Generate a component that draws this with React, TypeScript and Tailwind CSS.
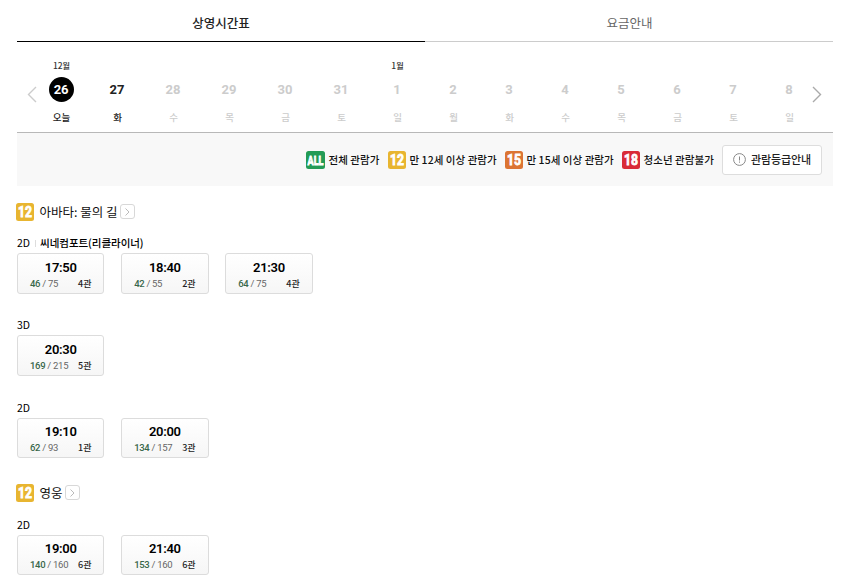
import clsx from 'clsx';

type Rating = 'ALL' | '12' | '15' | '18';

interface Showing {
    time: string;
    left: number;
    total: number;
    hall: string;
}

interface Group {
    type: string;
    note?: string;
    showings: Showing[];
}

interface Movie {
    title: string;
    rating: Rating;
    groups: Group[];
}

const days = [
    { date: 26, label: '오늘', month: '12월' },
    { date: 27, label: '화' },
    { date: 28, label: '수' },
    { date: 29, label: '목' },
    { date: 30, label: '금' },
    { date: 31, label: '토' },
    { date: 1, label: '일', month: '1월' },
    { date: 2, label: '월' },
    { date: 3, label: '화' },
    { date: 4, label: '수' },
    { date: 5, label: '목' },
    { date: 6, label: '금' },
    { date: 7, label: '토' },
    { date: 8, label: '일' },
];

const ratings: { rating: Rating; label: string; width: string }[] = [
    { rating: 'ALL', label: '전체 관람가', width: 'w-[82px]' },
    { rating: '12', label: '만 12세 이상 관람가', width: 'w-[117px]' },
    { rating: '15', label: '만 15세 이상 관람가', width: 'w-[117px]' },
    { rating: '18', label: '청소년 관람불가', width: 'w-[100px]' },
];

const movies: Movie[] = [
    {
        title: '아바타: 물의 길',
        rating: '12',
        groups: [
            {
                type: '2D',
                note: '씨네컴포트(리클라이너)',
                showings: [
                    { time: '17:50', left: 46, total: 75, hall: '4관' },
                    { time: '18:40', left: 42, total: 55, hall: '2관' },
                    { time: '21:30', left: 64, total: 75, hall: '4관' },
                ],
            },
            {
                type: '3D',
                showings: [{ time: '20:30', left: 169, total: 215, hall: '5관' }],
            },
            {
                type: '2D',
                showings: [
                    { time: '19:10', left: 62, total: 93, hall: '1관' },
                    { time: '20:00', left: 134, total: 157, hall: '3관' },
                ],
            },
        ],
    },
    {
        title: '영웅',
        rating: '12',
        groups: [
            {
                type: '2D',
                showings: [
                    { time: '19:00', left: 140, total: 160, hall: '6관' },
                    { time: '21:40', left: 153, total: 160, hall: '6관' },
                ],
            },
        ],
    },
];

const ratingColors: Record<Rating, string> = {
    ALL: '#239b56',
    '12': '#e8b530',
    '15': '#dc7433',
    '18': '#d92b38',
};

function RatingBadge({ rating }: { rating: Rating }) {
    const width = rating === 'ALL' ? 19 : 18;
    const textWidth = rating === 'ALL' ? 16 : 14;

    return (
        <svg width={width} height="18" viewBox={`0 0 ${width} 18`} className="shrink-0 overflow-visible">
            <rect width={width} height="18" rx="2.5" fill={ratingColors[rating]} />
            <text
                x={(width - textWidth) / 2}
                y={rating === 'ALL' ? 13.5 : 14}
                textLength={textWidth}
                lengthAdjust="spacingAndGlyphs"
                className={clsx(
                    "fill-white stroke-white font-['Roboto',sans-serif] font-bold",
                    rating === 'ALL' ? 'text-[13px]' : 'text-[14px]',
                )}
                strokeWidth="0.8"
            >
                {rating}
            </text>
        </svg>
    );
}

function Chevron({ flip = false, className }: { flip?: boolean; className: string }) {
    return (
        <svg width="10" height="17" viewBox="0 0 10 17" fill="none" strokeWidth="1.4" className={className}>
            <path d={flip ? 'M9 1L1.5 8.5L9 16' : 'M1 1L8.5 8.5L1 16'} stroke="currentColor" />
        </svg>
    );
}

function ShowingCard({ showing }: { showing: Showing }) {
    return (
        <button
            type="button"
            className="flex h-[40.6px] w-[87.45px] flex-col rounded-[3px] border border-[#dcdcdc] bg-linear-to-b from-white to-[#f6f6f6] px-3 pt-[5.6px]"
        >
            <span className="w-full text-center font-['Roboto',sans-serif] text-[13px] leading-4 font-semibold tracking-[-0.3px] text-black">
                {showing.time}
            </span>
            <span className="flex h-4 w-full items-center justify-between text-[9px] leading-4">
                <span className="font-['Roboto',sans-serif] text-[9.5px] tracking-[-0.3px] text-[#666]">
                    <span className="font-medium text-[#38674b]">{showing.left}</span> / {showing.total}
                </span>
                <span className="font-medium text-[#222]">{showing.hall}</span>
            </span>
        </button>
    );
}

function MovieSection({ movie, first }: { movie: Movie; first: boolean }) {
    return (
        <section>
            <h2 className={clsx('flex items-start', first ? 'h-[47px] pt-4' : 'h-[34.9px] pt-[3.4px]')}>
                <span className="-ml-px flex h-[19px] items-center">
                    <RatingBadge rating={movie.rating} />
                    <span className="ml-[5.5px] text-[12.5px] leading-[19px] text-[#111]">{movie.title}</span>
                    <span className="ml-[2.4px] flex h-[15px] w-[15px] items-center justify-center rounded-[3px] border border-[#d8d8d8]">
                        <svg width="5" height="8" viewBox="0 0 5 8" fill="none" stroke="#bbb">
                            <path d="M0.5 0.5L4 4L0.5 7.5" />
                        </svg>
                    </span>
                </span>
            </h2>
            {movie.groups.map((group, index) => (
                <div key={index} className="h-[82.3px]">
                    <div className="flex h-5 items-center text-[10.5px] leading-5 text-black">
                        <span>{group.type}</span>
                        {group.note && (
                            <>
                                <span className="mx-[4.5px] h-[7px] w-px bg-[#ddd]" />
                                <span className="font-medium tracking-[-0.05px]">{group.note}</span>
                            </>
                        )}
                    </div>
                    <div className="flex gap-[16.7px]">
                        {group.showings.map((showing) => (
                            <ShowingCard key={showing.time} showing={showing} />
                        ))}
                    </div>
                </div>
            ))}
        </section>
    );
}

export default function App() {
    return (
        <main className="h-[588px] overflow-hidden bg-white pr-6 pl-[17px] font-['Noto_Sans_CJK_KR',sans-serif]">
            <nav className="flex h-[42px] text-[12.5px] leading-[46px]">
                <button type="button" className="w-1/2 border-b border-black font-medium text-[#222]">상영시간표</button>
                <button type="button" className="w-1/2 border-b border-[#ccc] pl-px text-[#666]">요금안내</button>
            </nav>

            <div className="flex h-[91px] border-b border-[#b8b8b8]">
                <button type="button" className="w-4 shrink-0 pt-[15px] pl-[10px]">
                    <Chevron flip className="text-[#ccc]" />
                </button>
                <div className="flex">
                    {days.map((day, index) => (
                        <div
                            key={day.date}
                            className={clsx(
                                'flex w-14 shrink-0 flex-col items-center pt-[15px]',
                                index < 2 ? 'text-[#222]' : 'text-[#ccc]',
                            )}
                        >
                            <span className="h-5 pl-px text-[8.5px] leading-4 font-medium tracking-[-0.2px] text-[#333]">{day.month}</span>
                            <span
                                className={clsx(
                                    "flex h-[25px] w-[25px] items-center justify-center rounded-full font-['Roboto',sans-serif] text-[13px] font-bold",
                                    index === 0 && 'bg-black tracking-[-0.3px] text-white',
                                )}
                            >
                                {day.date}
                            </span>
                            <span className="mt-[7px] pl-px text-[9.5px] leading-4 font-medium">{day.label}</span>
                        </div>
                    ))}
                </div>
                <button type="button" className="-ml-[5px] shrink-0 pt-[15px]">
                    <Chevron className="text-[#aaa]" />
                </button>
            </div>

            <div className="flex h-[53px] items-center justify-end bg-[#f8f8f8] pr-[11px]">
                {ratings.map(({ rating, label, width }) => (
                    <div key={rating} className={clsx('flex shrink-0 items-center', width)}>
                        <RatingBadge rating={rating} />
                        <span className="ml-[3.5px] text-[10.5px] font-medium tracking-[0.05px] whitespace-nowrap text-[#111]">{label}</span>
                    </div>
                ))}
                <button
                    type="button"
                    className="flex h-[30px] w-[100px] items-center rounded-[3px] border border-[#ddd] bg-white pl-[10px] text-[11px] font-medium tracking-[-0.1px] text-[#222]"
                >
                    <svg width="13" height="13" viewBox="0 0 13 13" fill="none" stroke="#888" className="mr-[5px]">
                        <circle cx="6.5" cy="6.5" r="5.9" />
                        <path d="M6.5 3.5V7.5M6.5 8.5V9.7" />
                    </svg>
                    관람등급안내
                </button>
            </div>

            {movies.map((movie, index) => (
                <MovieSection key={movie.title} movie={movie} first={index === 0} />
            ))}
        </main>
    );
}
